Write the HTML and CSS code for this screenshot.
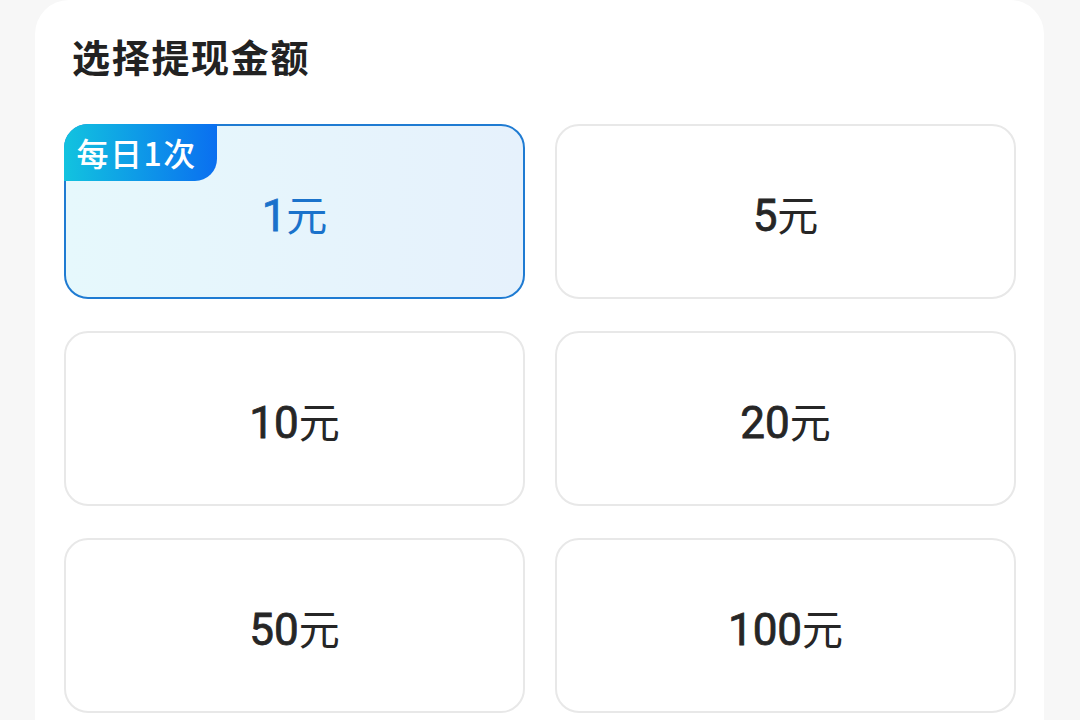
FILE: index.html
```html
<!DOCTYPE html>
<html lang="zh-CN">
<head>
<meta charset="utf-8">
<link rel="stylesheet" href="styles.css">
</head>
<body>
<div class="page">
  <section class="panel">
    <h2 class="title">选择提现金额</h2>
    <div class="grid">
      <div class="option selected">
        <span class="badge">每日1次</span>
        <span class="amount">1<span class="unit">元</span></span>
      </div>
      <div class="option"><span class="amount">5<span class="unit">元</span></span></div>
      <div class="option"><span class="amount">10<span class="unit">元</span></span></div>
      <div class="option"><span class="amount">20<span class="unit">元</span></span></div>
      <div class="option"><span class="amount">50<span class="unit">元</span></span></div>
      <div class="option"><span class="amount">100<span class="unit">元</span></span></div>
    </div>
  </section>
</div>
</body>
</html>
```

FILE: styles.css
```css
html, body {
  margin: 0;
  padding: 0;
  background: #f7f7f7;
  font-family: Roboto, "Noto Sans CJK SC", sans-serif;
}
.page {
  padding-left: 35px;
  width: 1009px;
  height: 720px;
  overflow: hidden;
}
.panel {
  background: #ffffff;
  border-radius: 34px 34px 0 0;
  padding: 31px 28px 40px 29px;
  min-height: 720px;
  box-sizing: border-box;
}
.title {
  margin: 0 0 43px 8px;
  font-family: "Noto Sans CJK SC", sans-serif;
  font-size: 38px;
  line-height: 50px;
  font-weight: 700;
  color: #222222;
  letter-spacing: 1.7px;
}
.grid {
  display: grid;
  grid-template-columns: 1fr 1fr;
  column-gap: 30px;
  row-gap: 32px;
}
.option {
  position: relative;
  height: 175px;
  box-sizing: border-box;
  border: 2px solid #e8e8e8;
  border-radius: 24px;
  background: #ffffff;
  display: flex;
  align-items: center;
  justify-content: center;
}
.option.selected {
  border: 2.5px solid #1f7bd2;
  background: linear-gradient(90deg, #e6f8fc 0%, #e6f1fc 100%);
}
.amount {
  font-family: Roboto, "Noto Sans CJK SC", sans-serif;
  font-size: 44px;
  font-weight: 400;
  -webkit-text-stroke: 0.8px currentColor;
  color: #262626;
  line-height: 1;
  margin-top: 8px;
}
.unit {
  font-family: "Noto Sans CJK SC", sans-serif;
  font-weight: 400;
  font-size: 41px;
  -webkit-text-stroke: 0;
}
.selected .amount {
  color: #1a72cb;
}
.badge {
  position: absolute;
  left: -2.5px;
  top: -2.5px;
  width: 153px;
  height: 57px;
  box-sizing: border-box;
  padding-left: 13px;
  border-radius: 24px 0 22px 0;
  background: linear-gradient(90deg, #12c3df 0%, #0a6ff0 100%);
  color: #ffffff;
  font-family: "Noto Sans CJK SC", sans-serif;
  font-size: 32px;
  font-weight: 500;
  line-height: 56px;
  letter-spacing: 1.5px;
}
```
